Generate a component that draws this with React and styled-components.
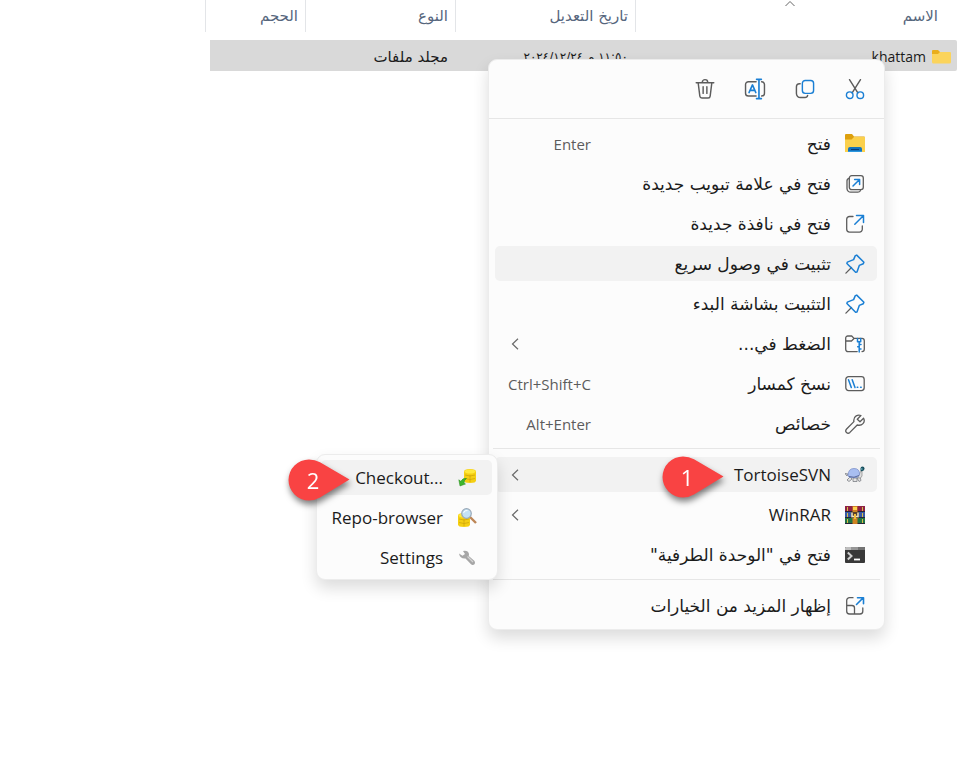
import React from "react";
import styled, { createGlobalStyle, css } from "styled-components";

const ink = "#1b1b1b";
const grey = "#5c5c5c";
const blue = "#1a7fd4";
const latin = '"Open Sans", "DejaVu Sans", sans-serif';
const arabic = '"DejaVu Sans", sans-serif';

const GlobalStyle = createGlobalStyle`
  * { box-sizing: border-box; }
  body { margin: 0; background: #fff; color: ${ink}; font-family: ${latin}; }
`;

const buttonReset = css`
  border: 0;
  background: none;
  padding: 0;
  font: inherit;
  color: inherit;
  cursor: default;
`;

const Explorer = styled.main`
  position: relative;
  min-height: 100vh;
  padding: 0 16px 0 205px;
  overflow: hidden;
`;

const FileTable = styled.table`
  width: 100%;
  table-layout: fixed;
  border-spacing: 0;
  font-size: 15px;
  font-family: ${arabic};
`;

const HeadCell = styled.th`
  position: relative;
  width: ${(p) => p.$width || "auto"};
  height: 32px;
  padding: 0 ${(p) => (p.$first ? 19 : 7)}px 0 0;
  border-left: 1px solid #e3e5e8;
  color: #56667d;
  font-weight: 400;
  text-align: start;
  white-space: nowrap;
`;

const SortMark = styled.svg`
  position: absolute;
  top: 0;
  left: 148px;
`;

const Gap = styled.tr`
  height: 8px;
`;

const Cell = styled.td`
  height: 31px;
  padding: 2px ${(p) => (p.$first ? 6 : 7)}px 0 0;
  background: #d9d9d9;
  white-space: nowrap;
  &:first-child { border-radius: 0 2px 2px 0; }
  &:last-child {
    border-left: 5px solid transparent;
    background-clip: padding-box;
  }
`;

const DateCell = styled(Cell)`
  font-size: 12px;
`;

const FileName = styled.span`
  display: flex;
  align-items: center;
  gap: 6px;
  font-family: ${latin};
  font-size: 14px;
`;

const panel = css`
  position: absolute;
  background: #fcfcfc;
  border: 1px solid #ececec;
  border-radius: 9px;
  box-shadow: 0 8px 16px rgba(0, 0, 0, 0.14);
`;

const Menu = styled.nav`
  ${panel}
  top: 59px;
  right: 88px;
  width: 397px;
  padding-bottom: 6px;
`;

const Toolbar = styled.div`
  display: flex;
  align-items: center;
  gap: 20px;
  height: 59px;
  padding: 0 14px;
  border-bottom: 1px solid #e6e6e6;
`;

const ToolButton = styled.button`
  ${buttonReset}
  display: grid;
  place-items: center;
  width: 30px;
  height: 30px;
`;

const Group = styled.ul`
  display: flex;
  flex-direction: column;
  gap: 5px;
  list-style: none;
  margin: 0;
  padding: 0 7px 0 6px;
`;

const MainGroup = styled(Group)`
  padding-top: 7px;
`;

const Separator = styled.hr`
  margin: 7px 4px 8px;
  border: 0;
  border-top: 1px solid #e6e6e6;
`;

const Row = styled.li`
  position: relative;
`;

const Item = styled.button`
  ${buttonReset}
  display: grid;
  grid-template-columns: 20px 1fr ${(p) => (p.$compact ? "" : "96px")};
  column-gap: 14px;
  align-items: center;
  width: 100%;
  height: 35px;
  padding-right: ${(p) => (p.$compact ? 15 : 12)}px;
  border-radius: 5px;
  background: ${(p) => (p.$active ? "#f2f2f2" : "transparent")};
  text-align: start;
`;

const Label = styled.bdi`
  font-family: ${(p) => (p.$latin ? latin : arabic)};
  font-size: 17px;
  line-height: 24px;
  text-align: right;
  white-space: nowrap;
`;

const Hint = styled.kbd`
  color: ${grey};
  font-family: ${latin};
  font-size: 15px;
  white-space: nowrap;
  direction: ltr;
  text-align: right;
`;

const Arrow = styled.svg`
  justify-self: end;
  margin-left: 16px;
`;

const SubMenu = styled.div`
  ${panel}
  top: -3px;
  right: 379px;
  width: 182px;
  padding: 5px 0 4px;
  z-index: 2;
`;

const SubGroup = styled(Group)`
  padding: 0 5px 0 4px;
`;

const Marker = styled.span`
  position: absolute;
  z-index: 3;
  top: ${(p) => p.$top}px;
  right: ${(p) => p.$right}px;
  display: flex;
  width: 62px;
  height: 42px;
  color: #fff;
  font-size: 22px;
  line-height: 42px;
  filter: drop-shadow(1px 4px 3px rgba(0, 0, 0, 0.5));
`;

const MarkerShape = styled.svg`
  position: absolute;
  inset: 0;
`;

const MarkerText = styled.span`
  position: relative;
  width: 50px;
  margin-right: auto;
  text-align: center;
`;

function Svg({ children, size = 20 }) {
  return (
    <svg width={size} height={size} viewBox="0 0 20 20" fill="none" stroke={grey} strokeWidth="1.3" strokeLinecap="round" strokeLinejoin="round" aria-hidden="true">
      {children}
    </svg>
  );
}

const CutIcon = () => (
  <Svg size={22}>
    <path d="M5 1.5 12.6 13.5M15 1.5 7.4 13.5" />
    <circle cx="5.2" cy="15.6" r="3" stroke={blue} />
    <circle cx="14.8" cy="15.6" r="3" stroke={blue} />
  </Svg>
);
const CopyIcon = () => (
  <Svg size={22}>
    <path d="M5.6 5.2H5A2.8 2.8 0 0 0 2.2 8v6.2A3.6 3.6 0 0 0 5.8 17.8H10a2.5 2.5 0 0 0 2.4-2" />
    <rect x="7.6" y="2.2" width="10.2" height="11.8" rx="2.6" stroke={blue} />
  </Svg>
);
const RenameIcon = () => (
  <Svg size={22}>
    <path d="M11 3.4H4A2.6 2.6 0 0 0 1.4 6v7.8A2.6 2.6 0 0 0 4 16.4h7M16 3.4A2.6 2.6 0 0 1 18.6 6v7.8a2.6 2.6 0 0 1-2.6 2.6" />
    <path d="M4.6 13.2 7.7 6.3l3 6.9M5.6 11.2h4.2M11.4 1.2h4.4M13.6 1.2v17.6M11.4 18.8h4.4" stroke={blue} strokeWidth="1.5" />
  </Svg>
);
const DeleteIcon = () => (
  <Svg size={22}>
    <path d="M2 4.3h16M3.8 4.5l1.5 12a1.9 1.9 0 0 0 1.9 1.7h5.6a1.9 1.9 0 0 0 1.9-1.7l1.5-12M7.5 4a2.5 2.5 0 0 1 5 0M8.3 8v6M11.7 8v6" />
  </Svg>
);

const FolderIcon = () => (
  <svg width="19" height="16" viewBox="0 0 19 16" aria-hidden="true">
    <path d="M0 2q0-1 1-1h5l2 2h10v4H0z" fill="#e9ae1c" />
    <path d="M0 5h6l2-2h10q1 0 1 1v9q0 1.5-1.5 1.5h-16Q0 14.5 0 13z" fill="#fbd45c" />
  </svg>
);
const OpenIcon = () => (
  <svg width="20" height="20" viewBox="0 0 20 20" aria-hidden="true">
    <path d="M0 1q0-1 1-1h6l2 2.5h10q1 0 1 1V8H0z" fill="#dda00e" />
    <path d="M0 5.500h6.500L9 3h11v15H0z" fill="#fbd04c" />
    <path d="M3 18v-3q0-2 2-2h10q2 0 2 2v3z" fill="#1573bd" />
    <path d="M6 15.500h8" stroke="#083c79" strokeWidth="1" />
    <path d="M3 17.500h14" stroke="#2d98df" />
  </svg>
);
const NewTabIcon = () => (
  <Svg>
    <rect x="4.3" y="1.7" width="14" height="14" rx="2.4" />
    <path d="M4 4.3A2.6 2.6 0 0 0 2 7v7.5A3.7 3.7 0 0 0 5.7 18.2H13A2.7 2.7 0 0 0 15.6 16" />
    <path d="M8 12l6.300-6.300M9.600 5.400h5v5" stroke={blue} strokeWidth="1.5" />
  </Svg>
);
const NewWindowIcon = () => (
  <Svg>
    <path d="M8 2.500H4.500A2.800 2.800 0 0 0 1.700 5.300v10A2.800 2.800 0 0 0 4.500 18.100h10a2.800 2.800 0 0 0 2.800-2.800V12" />
    <path d="M9.800 10.200 18.300 1.700M11.500 1.500h7v7" stroke={blue} strokeWidth="1.5" />
  </Svg>
);
const PinIcon = () => (
  <Svg>
    <path d="M.9 19.100 6.500 13.500" />
    <path d="M11.700 1.100 18.900 8.300 18.300 9.700 14.300 11.400 12 17.900 10.600 18.200 1.900 9.500 2.300 8.100 8.600 5.600 10.300 1.600Z" stroke={blue} strokeWidth="1.5" />
  </Svg>
);
const ZipIcon = () => (
  <Svg>
    <path d="M12.200 17.600H3a2.300 2.300 0 0 1-2.300-2.300V4A2 2 0 0 1 2.700 2h4l2.300 2.400h8a2.300 2.300 0 0 1 2.300 2.300v8.600a2.300 2.300 0 0 1-2.300 2.300M.8 7H6.500L9 4.500" />
    <path d="M12.500 4.500v3.300h3.200V4.500M14.200 8v10M14.500 10.500h1.500M12.700 12.700h1.500M14.500 15h1.500" stroke={blue} strokeWidth="1.5" />
  </Svg>
);
const PathIcon = () => (
  <Svg>
    <rect x=".8" y="2.600" width="18.400" height="14" rx="2.800" />
    <path d="M3.500 5.800 6.300 13.500M7.200 5.800 10 13.500M12.200 13.300h.6M15.600 13.300h.6" stroke={blue} strokeWidth="1.5" />
  </Svg>
);
const WrenchIcon = () => (
  <Svg>
    <path d="M18.600 4.200 15 7.800 12.300 5.200 15.900 1.500C13 .3 8.600 2 8.800 6.700l.1.900-7.300 7.400c-2.400 2.700 1 5.500 3.300 3.400l7.300-7.400c4.800 1.200 8.500-2.600 6.400-6.800Z" />
  </Svg>
);
const TortoiseIcon = () => (
  <svg width="20" height="20" viewBox="0 0 20 20" aria-hidden="true">
    <path d="M0 8.500 3 9l-1 2zM5 12l-3 3 2 1.500L7 14zM12 13l2 3.500 2-1L15 12zM8 13v3.500h4V13z" fill="#e3e3e3" stroke="#7b7e84" strokeWidth=".8" />
    <path d="M13 10q2 1 2-3l2-1v5q-1 3-4 2z" fill="#dedede" stroke="#888" strokeWidth=".7" />
    <path d="M3 11Q3 3.500 9 3.500T14.500 10L12 12.500H5z" fill="#a8bef1" stroke="#7c90c9" strokeWidth=".8" />
    <path d="M4 11.500q5 2 10-1" stroke="#5b6a9a" fill="none" />
    <path d="M15.500 3.500q0-2 2-2t2 2-2 2.500-2-.5z" fill="#174f5e" />
    <path d="M16 4h1.500" stroke="#8cd9e5" strokeWidth="1" />
  </svg>
);
const RarIcon = () => (
  <svg width="20" height="20" viewBox="0 0 20 20" aria-hidden="true">
    <path d="M0 1h20v6H0z" fill="#8f2244" />
    <path d="M0 7h20v6H0z" fill="#3759a5" />
    <path d="M0 13h20v6H0z" fill="#217344" />
    <path d="M0 6.500h20M0 12.500h20M0 18.500h20" stroke="#262338" />
    <path d="M2.500 2v4M2.500 8v4M2.500 14v4M17.500 2v4M17.500 8v4M17.500 14v4" stroke="#d9bc45" strokeWidth="1" />
    <path d="M7.500 1h5v18h-5z" fill="#cf8321" />
    <path d="M8 2h4v3H8z" fill="#ffd34f" />
    <path d="M6 7h8v6H6z" fill="#57402b" />
    <path d="M7 7.500v4h6v-4" fill="none" stroke="#eee3c5" strokeWidth="1.5" />
    <path d="M9 9h2v5H9z" fill="#f0bd3d" />
  </svg>
);
const TerminalIcon = () => (
  <svg width="20" height="20" viewBox="0 0 20 20" aria-hidden="true">
    <path d="M0 3q0-1 1-1h18q1 0 1 1v14q0 1-1 1H1q-1 0-1-1z" fill="#383838" />
    <path d="M0 5V3q0-1 1-1h5v3z" fill="#bdbdbd" />
    <path d="M6 2h7v3H6z" fill="#969696" />
    <path d="M13 2h6q1 0 1 1v2h-7z" fill="#737373" />
    <path d="M2.800 7.500 6.500 11l-3.700 3.500" fill="none" stroke="#d0d0d0" strokeWidth="2" />
    <path d="M9 14.500h6" stroke="#fff" strokeWidth="1.8" />
  </svg>
);
const MoreIcon = () => (
  <Svg>
    <path d="M8 1.700H4.500A2.800 2.800 0 0 0 1.700 4.500v10.700A2.800 2.800 0 0 0 4.500 18H15a2.800 2.800 0 0 0 2.800-2.800V12M1.700 9.500H7a2.500 2.500 0 0 1 2.500 2.500v6" />
    <path d="M11.500 8.500 18 2M12.500 1.700h6v6" stroke={blue} strokeWidth="1.6" />
  </Svg>
);
const Cylinder = ({ x, y }) => (
  <g transform={`translate(${x} ${y})`}>
    <path d="M0 2.500Q0 0 6 0t6 2.500v9Q12 14 6 14T0 11.500z" fill="#f5cf12" />
    <ellipse cx="6" cy="2.5" rx="5.5" ry="2" fill="#ffe93d" />
    <path d="M1 6q5 2 10 0M1 9.500q5 2 10 0M6 6v7" stroke="#cfa60b" fill="none" strokeWidth=".8" />
  </g>
);
const CheckoutIcon = () => (
  <svg width="20" height="20" viewBox="0 0 20 20" aria-hidden="true">
    <Cylinder x={7} y={1} />
    <path d="M3 18 1.800 11.800l2 1.500Q6 9.500 9.500 10.500 7 12 7 15l1.500 1z" fill="#3db52c" stroke="#268b1d" strokeWidth=".5" />
  </svg>
);
const RepoIcon = () => (
  <svg width="20" height="20" viewBox="0 0 20 20" aria-hidden="true">
    <Cylinder x={1} y={5} />
    <path d="m13 9 6 6" stroke="#bd8657" strokeWidth="2.4" />
    <circle cx="9.5" cy="5.5" r="4.8" fill="#c4e2f5" stroke="#9aa9b8" strokeWidth="1.2" />
    <path d="M6.500 5q1-3 4-2.500" stroke="#fff" fill="none" />
  </svg>
);
const SettingsIcon = () => (
  <svg width="20" height="20" viewBox="0 0 20 20" aria-hidden="true">
    <path d="M6 3q5-1 6 3l-.2 2L17.500 13q1.500 3-1.500 4-1 .3-2-.7L8.500 10.500Q3 11 2 5.500l3.500 2.300L8 6z" fill="#a6a6a6" />
    <path d="M10.500 8.500 16 14" stroke="#d4d4d4" strokeWidth="1.2" />
  </svg>
);

const Chevron = () => (
  <Arrow width="8" height="12" viewBox="0 0 8 12" fill="none" stroke="#6a6a6a" strokeWidth="1.2" aria-hidden="true">
    <path d="M7 .8 1.500 6 7 11.200" />
  </Arrow>
);

function Callout({ number, top, right }) {
  return (
    <Marker $top={top} $right={right}>
      <MarkerShape width="62" height="42" viewBox="0 0 62 42" aria-hidden="true">
        <path d="M61.500 20.500 32 38.500Q27 41.500 21 41.500A20.500 20.500 0 0 1 21 .5Q27 .5 32 3.200Z" fill="#f94343" />
      </MarkerShape>
      <MarkerText>{number}</MarkerText>
    </Marker>
  );
}

function MenuRow({ icon: Icon, text, isLatin, hint, arrow, active, compact, children }) {
  return (
    <Row>
      <Item type="button" $active={active} $compact={compact}>
        <Icon />
        <Label $latin={isLatin}>{text}</Label>
        {hint && <Hint>{hint}</Hint>}
        {arrow && <Chevron />}
      </Item>
      {children}
    </Row>
  );
}

const mainItems = [
  { icon: OpenIcon, text: "فتح", hint: "Enter" },
  { icon: NewTabIcon, text: "فتح في علامة تبويب جديدة" },
  { icon: NewWindowIcon, text: "فتح في نافذة جديدة" },
  { icon: PinIcon, text: "تثبيت في وصول سريع", active: true },
  { icon: PinIcon, text: "التثبيت بشاشة البدء" },
  { icon: ZipIcon, text: "الضغط في...", arrow: true },
  { icon: PathIcon, text: "نسخ كمسار", hint: "Ctrl+Shift+C" },
  { icon: WrenchIcon, text: "خصائص", hint: "Alt+Enter" },
];

const tools = [
  { name: "قص", icon: CutIcon },
  { name: "نسخ", icon: CopyIcon },
  { name: "إعادة تسمية", icon: RenameIcon },
  { name: "حذف", icon: DeleteIcon },
];

export default function App() {
  return (
    <Explorer dir="rtl" lang="ar">
      <GlobalStyle />
      <FileTable>
        <thead>
          <tr>
            <HeadCell $first scope="col">
              الاسم
              <SortMark width="12" height="8" viewBox="0 0 12 8" fill="none" stroke="#666" aria-hidden="true">
                <path d="M1.500 6 6 1.500 10.500 6" />
              </SortMark>
            </HeadCell>
            <HeadCell $width="180px" scope="col">تاريخ التعديل</HeadCell>
            <HeadCell $width="150px" scope="col">النوع</HeadCell>
            <HeadCell $width="100px" scope="col">الحجم</HeadCell>
          </tr>
        </thead>
        <tbody>
          <Gap aria-hidden="true" />
          <tr>
            <Cell $first>
              <FileName><FolderIcon />khattam</FileName>
            </Cell>
            <DateCell>١١:٥٠ م ٢٠٢٤/١٢/٢٤</DateCell>
            <Cell>مجلد ملفات</Cell>
            <Cell />
          </tr>
        </tbody>
      </FileTable>

      <Menu>
        <Toolbar>
          {tools.map(({ name, icon: Icon }) => (
            <ToolButton key={name} type="button" aria-label={name}><Icon /></ToolButton>
          ))}
        </Toolbar>
        <MainGroup>
          {mainItems.map((item) => <MenuRow key={item.text} {...item} />)}
        </MainGroup>
        <Separator />
        <Group>
          <MenuRow icon={TortoiseIcon} text="TortoiseSVN" isLatin arrow active>
            <Callout number="1" top={-1} right={153} />
            <SubMenu>
              <SubGroup>
                <MenuRow icon={CheckoutIcon} text="Checkout..." isLatin active compact>
                  <Callout number="2" top={-1} right={142} />
                </MenuRow>
                <MenuRow icon={RepoIcon} text="Repo-browser" isLatin compact />
                <MenuRow icon={SettingsIcon} text="Settings" isLatin compact />
              </SubGroup>
            </SubMenu>
          </MenuRow>
          <MenuRow icon={RarIcon} text="WinRAR" isLatin arrow />
          <MenuRow icon={TerminalIcon} text={'فتح في "الوحدة الطرفية"'} />
        </Group>
        <Separator />
        <Group>
          <MenuRow icon={MoreIcon} text="إظهار المزيد من الخيارات" />
        </Group>
      </Menu>
    </Explorer>
  );
}
